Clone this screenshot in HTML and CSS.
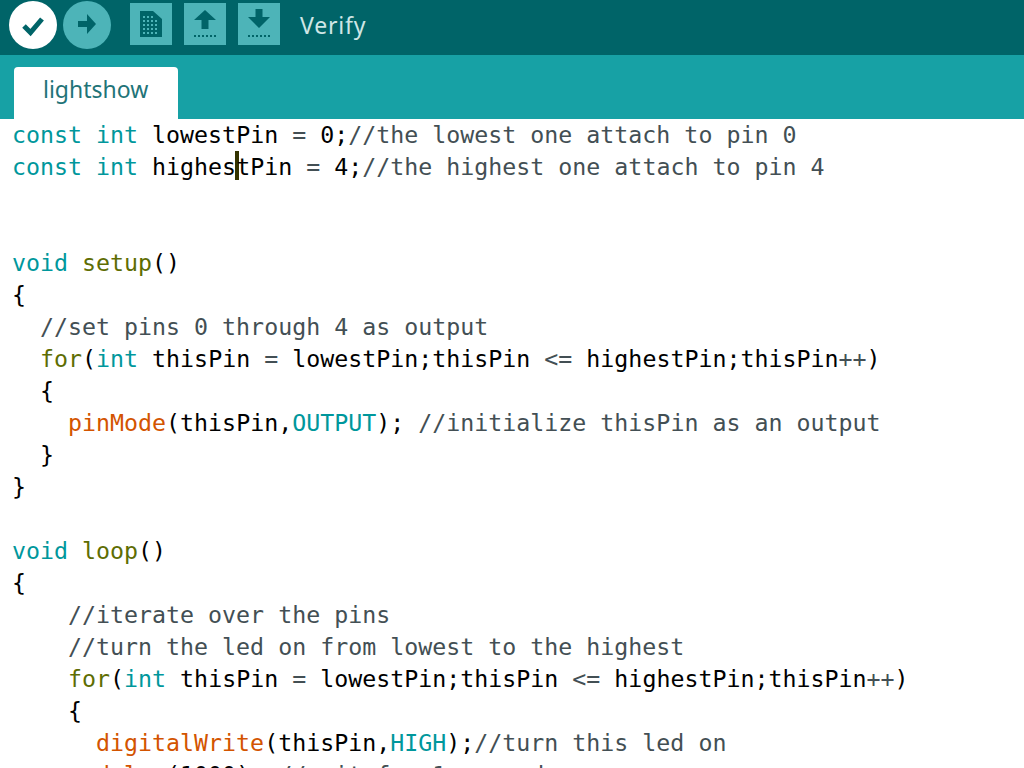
FILE: index.html
```html
<!DOCTYPE html>
<html lang="en">
<head>
<meta charset="utf-8">
<title>lightshow</title>
<link rel="stylesheet" href="styles.css">
</head>
<body>
<div class="app">
  <header class="toolbar">
    <button class="round active" aria-label="Verify"><svg viewBox="0 0 48 48" width="48" height="48"><path d="M15 25l6.500 6.500L33 18" fill="none" stroke="#006468" stroke-width="5"/></svg></button>
    <button class="round" aria-label="Upload"><svg viewBox="0 0 48 48" width="48" height="48"><path d="M15 20h9v-7l9 10-9 10v-7h-9z" fill="#006468"/></svg></button>
    <div class="squares">
      <button class="square" aria-label="New"><svg viewBox="0 0 42 42" width="42" height="42"><path fill-rule="evenodd" fill="#006468" d="M10 8h13l9 8v18H10zM13 13v2h2v-2zM17 13v2h2v-2zM21 13v2h2v-2zM13 17v2h2v-2zM17 17v2h2v-2zM21 17v2h2v-2zM25 17v2h2v-2zM13 21v2h2v-2zM17 21v2h2v-2zM21 21v2h2v-2zM25 21v2h2v-2zM13 25v2h2v-2zM17 25v2h2v-2zM21 25v2h2v-2zM25 25v2h2v-2zM13 29v2h2v-2zM17 29v2h2v-2zM21 29v2h2v-2zM25 29v2h2v-2z"/></svg></button>
      <button class="square" aria-label="Open"><svg viewBox="0 0 42 42" width="42" height="42"><path fill="#006468" d="M21 7l11 10h-7.500v9h-7v-9H10z"/><path d="M10 33h22" stroke="#006468" stroke-width="2" stroke-dasharray="2 2"/></svg></button>
      <button class="square" aria-label="Save"><svg viewBox="0 0 42 42" width="42" height="42"><path fill="#006468" d="M17.500 6h7v8H32L21 25 10 14h7.500z"/><path d="M10 33h22" stroke="#006468" stroke-width="2" stroke-dasharray="2 2"/></svg></button>
    </div>
    <span class="status">Verify</span>
  </header>
  <nav class="tabs"><div class="tab">lightshow</div></nav>
  <main class="editor">
<pre class="code"><span class="k">const int</span> lowestPin <span class="o">=</span> 0;<span class="c">//the lowest one attach to pin 0</span>
<span class="k">const int</span> highes<span class="caret"></span>tPin <span class="o">=</span> 4;<span class="c">//the highest one attach to pin 4</span>


<span class="k">void</span> <span class="f">setup</span>()
{
  <span class="c">//set pins 0 through 4 as output</span>
  <span class="f">for</span>(<span class="k">int</span> thisPin <span class="o">=</span> lowestPin;thisPin <span class="o">&lt;=</span> highestPin;thisPin<span class="o">++</span>)
  {
    <span class="m">pinMode</span>(thisPin,<span class="k">OUTPUT</span>); <span class="c">//initialize thisPin as an output</span>
  }
}

<span class="k">void</span> <span class="f">loop</span>()
{
    <span class="c">//iterate over the pins</span>
    <span class="c">//turn the led on from lowest to the highest</span>
    <span class="f">for</span>(<span class="k">int</span> thisPin <span class="o">=</span> lowestPin;thisPin <span class="o">&lt;=</span> highestPin;thisPin<span class="o">++</span>)
    {
      <span class="m">digitalWrite</span>(thisPin,<span class="k">HIGH</span>);<span class="c">//turn this led on</span>
      <span class="m">delay</span>(1000); <span class="c">//wait for 1 second</span>
    }
</pre>
  </main>
</div>
</body>
</html>
```
FILE: styles.css
```css
* { box-sizing: border-box; }
html, body { margin: 0; height: 100%; overflow: hidden; background: #fff; }
.app { width: 1024px; height: 768px; display: flex; flex-direction: column; overflow: hidden; }
.toolbar { height: 55px; flex: none; background: #006468; display: flex; align-items: flex-start; padding: 1px 0 0 9px; }
button { border: 0; padding: 0; margin: 0; background: #4db4b8; display: block; }
.round { width: 48px; height: 48px; border-radius: 50%; margin-right: 6px; }
.round.active { background: #fff; }
.squares { display: flex; gap: 12px; margin: 2px 0 0 13px; }
.square { width: 42px; height: 42px; }
svg { display: block; }
.status { margin: 8px 0 0 20px; color: #cfe6e6; font: 23px/32px "Noto Sans", sans-serif; letter-spacing: .8px; }
.tabs { height: 64px; flex: none; background: #17a1a5; padding: 12px 0 0 14px; display: flex; }
.tab { width: 164px; background: #fff; border-radius: 4px 4px 0 0; color: #1f7478; font: 23px/32px "Noto Sans", sans-serif; padding: 6px 0 0 29px; }
.editor { flex: 1; min-height: 0; overflow: hidden; }
.code { margin: 0; padding: 0 0 0 12px; font: 23.27px/32px "DejaVu Sans Mono", monospace; color: #000; }
.k { color: #00979c; }
.f { color: #5e6d03; }
.m { color: #d35400; }
.c { color: #434f54; }
.o { color: #434f54; }
.caret { display: inline-block; width: 4px; height: 29px; margin: 0 -3px 0 -1px; background: #333300; vertical-align: -5px; }
```
